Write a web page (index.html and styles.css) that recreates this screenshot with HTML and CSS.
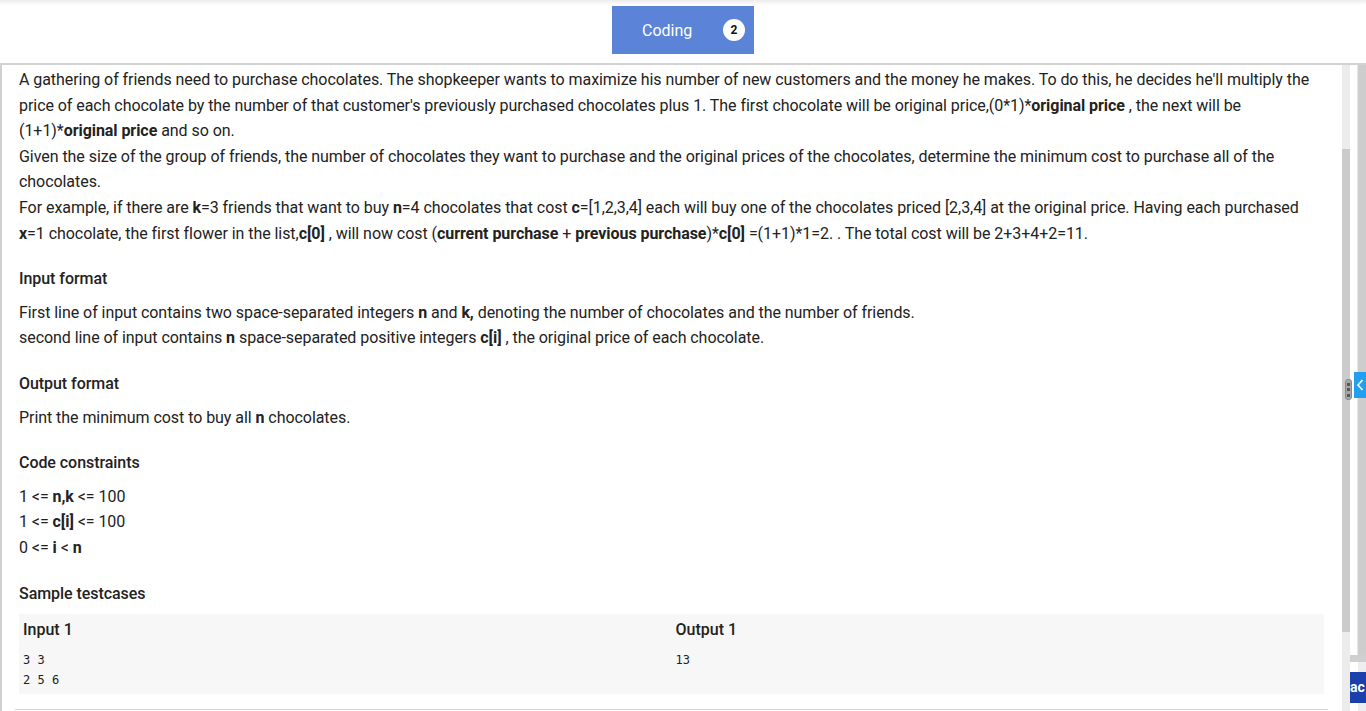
FILE: index.html
```html
<!DOCTYPE html>
<html>
<head>
<meta charset="utf-8">
<link rel="stylesheet" href="styles.css">
</head>
<body>
<header class="topbar">
  <div class="tab">
    <span class="tab-label">Coding</span>
    <span class="badge">2</span>
  </div>
</header>
<div class="main">
  <div class="panel">
    <div class="question">
      <p>A gathering of friends need to purchase chocolates. The shopkeeper wants to maximize his number of new customers and the money he makes. To do this, he decides he'll multiply the price of each chocolate by the number of that customer's previously purchased chocolates plus 1. The first chocolate will be original price,(0*1)*<b>original price</b> , the next will be (1+1)*<b>original price</b> and so on.</p>
      <p>Given the size of the group of friends, the number of chocolates they want to purchase and the original prices of the chocolates, determine the minimum cost to purchase all of the chocolates.</p>
      <p>For example, if there are <b>k</b>=3 friends that want to buy <b>n</b>=4 chocolates that cost <b>c</b>=[1,2,3,4] each will buy one of the chocolates priced [2,3,4] at the original price. Having each purchased <b>x</b>=1 chocolate, the first flower in the list,<b>c[0]</b> , will now cost (<b>current purchase</b> + <b>previous purchase</b>)*<b>c[0]</b> =(1+1)*1=2. . The total cost will be 2+3+4+2=11.</p>

      <h3 class="section-title">Input format</h3>
      <p>First line of input contains two space-separated integers <b>n</b> and <b>k,</b> denoting the number of chocolates and the number of friends.</p>
      <p>second line of input contains <b>n</b> space-separated positive integers <b>c[i]</b> , the original price of each chocolate.</p>

      <h3 class="section-title">Output format</h3>
      <p>Print the minimum cost to buy all <b>n</b> chocolates.</p>

      <h3 class="section-title">Code constraints</h3>
      <p>1 &lt;= <b>n,k</b> &lt;= 100</p>
      <p>1 &lt;= <b>c[i]</b> &lt;= 100</p>
      <p>0 &lt;= <b>i</b> &lt; <b>n</b></p>

      <h3 class="section-title">Sample testcases</h3>
      <div class="sample">
        <div class="sample-col">
          <div class="sample-title">Input 1</div>
          <pre class="sample-data">3 3
2 5 6</pre>
        </div>
        <div class="sample-col">
          <div class="sample-title">Output 1</div>
          <pre class="sample-data">13</pre>
        </div>
      </div>
      <div class="divider"></div>
    </div>
  </div>
  <div class="scroll-track">
    <div class="scroll-thumb"></div>
  </div>
  <div class="gutter">
    <div class="gutter-top"></div>
    <div class="gutter-bar"></div>
    <div class="run-btn">ac</div>
  </div>
  <div class="edge">
    <div class="edge-top"></div>
  </div>
  <div class="resize-handle"><i></i><i></i><i></i></div>
  <div class="collapse-tab">
    <svg width="8" height="12" viewBox="0 0 8 12"><path d="M6.5 1 L2 6 L6.5 11" fill="none" stroke="#fff" stroke-width="1.6"/></svg>
  </div>
</div>
</body>
</html>
```
FILE: styles.css
```css
html, body {
  margin: 0;
  padding: 0;
  height: 100%;
  overflow: hidden;
  background: #fff;
}
body {
  font-family: Roboto, "Liberation Sans", sans-serif;
  color: #222;
}
.topbar {
  height: 63px;
  border-bottom: 2px solid #d2d2d2;
  display: flex;
  justify-content: center;
  align-items: flex-start;
  background: linear-gradient(#ececec 0, #fff 5px);
}
.tab {
  margin-top: 6px;
  height: 48px;
  width: 142px;
  box-sizing: border-box;
  background: #5b84d9;
  display: flex;
  align-items: center;
  padding-left: 30px;
  padding-right: 9px;
}
.tab-label {
  color: #fff;
  font-size: 16px;
  flex: 1;
}
.badge {
  width: 22px;
  height: 22px;
  border-radius: 50%;
  background: #fff;
  color: #111;
  font-size: 12px;
  font-weight: 700;
  display: flex;
  align-items: center;
  justify-content: center;
}
.main {
  position: relative;
  display: flex;
  height: calc(100vh - 65px);
}
.panel {
  width: 1342px;
  box-sizing: border-box;
  border-left: 2px solid #d0d0d0;
  padding: 2px 18px 0 17px;
  overflow: hidden;
}
.question {
  letter-spacing: -0.055px;
}
.question p {
  margin: 0;
  font-size: 16px;
  line-height: 25.6px;
}
.question b {
  font-weight: 700;
}
.section-title {
  margin: 20px 0 8px;
  font-size: 16px;
  font-weight: 500;
  line-height: 25.6px;
}
.sample {
  display: flex;
  background: #f7f7f7;
  margin-top: 8px;
  letter-spacing: 0;
}
.sample-col {
  flex: 1;
  padding: 6px 4px 4px;
}
.sample-title {
  font-size: 16px;
  font-weight: 500;
  line-height: 20px;
  margin-bottom: 10px;
}
.sample-data {
  margin: 0;
  font-family: "DejaVu Sans Mono", "Liberation Mono", monospace;
  font-size: 12px;
  line-height: 20px;
  color: #222;
}
.divider {
  margin: 15px -4px 0;
  border-top: 1px solid #d8d8d8;
}
.scroll-track {
  width: 8px;
  background: #ececec;
  padding-top: 84px;
  box-sizing: border-box;
}
.scroll-thumb {
  height: 483px;
  background: #cbcbcb;
}
.gutter {
  width: 8px;
  display: flex;
  flex-direction: column;
}
.gutter-top {
  height: 590px;
  border-right: 1px solid #e6e6e6;
}
.gutter-bar {
  height: 7px;
  background: #cfcfcf;
  margin-right: -8px;
  position: relative;
  z-index: 1;
}
.run-btn {
  margin-top: 10px;
  height: 31px;
  width: 16px;
  background: #1b3fab;
  color: #fff;
  font-size: 14px;
  font-weight: 700;
  line-height: 31px;
  overflow: hidden;
  white-space: nowrap;
  position: relative;
  z-index: 2;
}
.edge {
  width: 8px;
  background: #eeeef0;
}
.edge-top {
  height: 590px;
  background: #cdcdcd;
}
.resize-handle {
  position: absolute;
  left: 1345px;
  top: 314px;
  width: 7px;
  height: 21px;
  box-sizing: border-box;
  border: 1px solid #888;
  border-radius: 3px;
  background: #a8a8a8;
  display: flex;
  flex-direction: column;
  align-items: center;
  justify-content: space-evenly;
}
.resize-handle i {
  display: block;
  width: 3px;
  height: 3px;
  background: #555;
}
.collapse-tab {
  position: absolute;
  left: 1354px;
  top: 307px;
  width: 12px;
  height: 26px;
  background: #22a0ef;
  display: flex;
  align-items: center;
  justify-content: center;
}
```
